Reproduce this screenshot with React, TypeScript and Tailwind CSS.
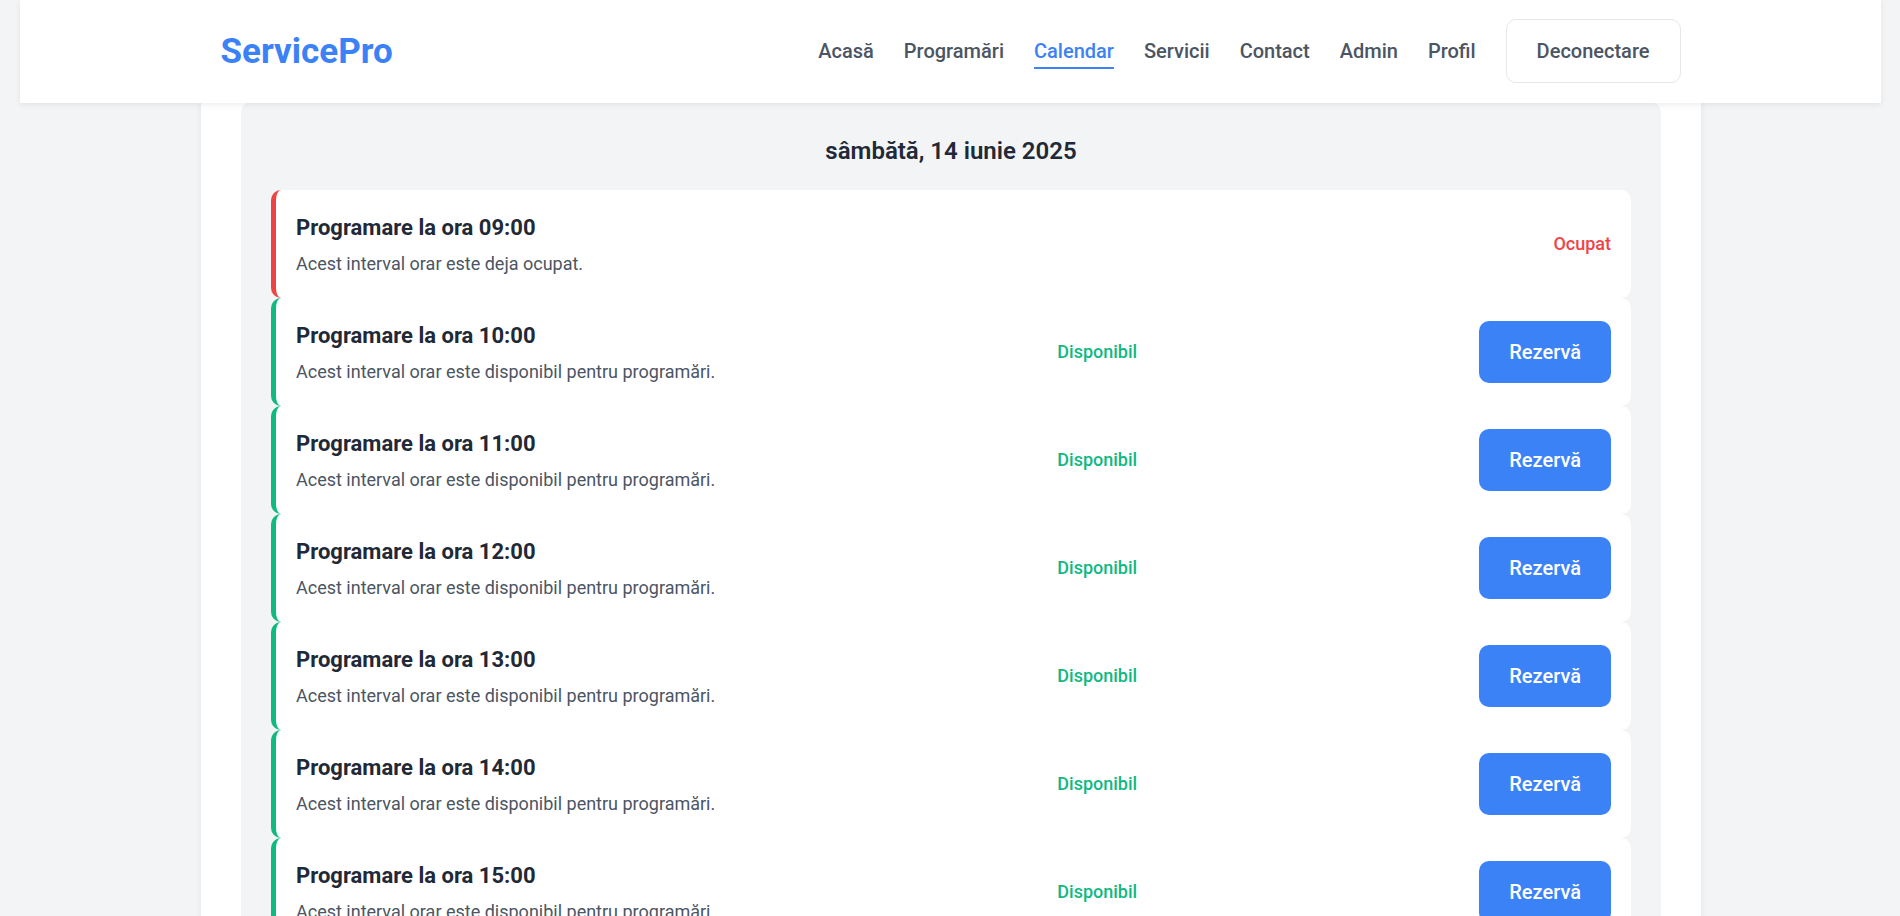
const navLinks = [
  { label: "Acasă", href: "#acasa" },
  { label: "Programări", href: "#programari" },
  { label: "Calendar", href: "#calendar", active: true },
  { label: "Servicii", href: "#servicii" },
  { label: "Contact", href: "#contact" },
  { label: "Admin", href: "#admin" },
  { label: "Profil", href: "#profil" },
];

const slots = [
  { hour: "09:00", available: false },
  { hour: "10:00", available: true },
  { hour: "11:00", available: true },
  { hour: "12:00", available: true },
  { hour: "13:00", available: true },
  { hour: "14:00", available: true },
  { hour: "15:00", available: true },
];

function Header() {
  return (
    <header className="sticky top-0 z-10 mr-[19px] ml-5 bg-white pt-[19px] pb-5 shadow-[0_2px_6px_rgba(0,0,0,0.07)]">
      <div className="mx-auto flex max-w-[1500px] items-center justify-between px-5">
        <a href="#acasa" className="pt-0.5 text-[35px] leading-[56px] font-bold text-[#3b82f6]">
          ServicePro
        </a>
        <nav className="flex items-center gap-[30px]">
          {navLinks.map((link) => (
            <a
              key={link.label}
              href={link.href}
              aria-current={link.active ? "page" : undefined}
              className={
                link.active
                  ? "border-b-2 border-[#3b82f6] pt-0.5 font-medium text-[#3b82f6]"
                  : "border-b-2 border-transparent pt-0.5 font-medium text-[#4b5563]"
              }
            >
              {link.label}
            </a>
          ))}
          <button
            type="button"
            className="rounded-[10px] border border-[#e5e7eb] px-[30px] py-[15px] font-medium text-[#4b5563]"
          >
            Deconectare
          </button>
        </nav>
      </div>
    </header>
  );
}

function Slot({ hour, available }: { hour: string; available: boolean }) {
  return (
    <li
      className={
        available
          ? "flex items-center justify-between rounded-[10px] border-l-[5px] border-[#10b981] bg-white px-5"
          : "flex items-center justify-between rounded-[10px] border-l-[5px] border-[#ef4444] bg-white px-5"
      }
    >
      <div className="py-5">
        <h3 className="mb-[5px] text-[22px] leading-[35px] font-bold text-[#1f2937]">
          Programare la ora {hour}
        </h3>
        <p className="text-[18px] leading-[28px] text-[#4b5563]">
          {available
            ? "Acest interval orar este disponibil pentru programări."
            : "Acest interval orar este deja ocupat."}
        </p>
      </div>
      <span
        className={
          available
            ? "text-[18px] leading-[28px] font-medium text-[#10b981]"
            : "text-[18px] leading-[28px] font-medium text-[#ef4444]"
        }
      >
        {available ? "Disponibil" : "Ocupat"}
      </span>
      {available && (
        <button
          type="button"
          aria-label={`Rezervă ora ${hour}`}
          className="rounded-[10px] bg-[#3b82f6] px-[30px] py-[15px] font-medium text-white"
        >
          Rezervă
        </button>
      )}
    </li>
  );
}

export default function App() {
  return (
    <div className="min-h-screen bg-[#f3f4f6] font-[Roboto,sans-serif] text-[20px] leading-[32px]">
      <Header />
      <main className="-mt-[41px] pr-5 pl-[22px]">
        <div className="mx-auto max-w-[1500px] rounded-[10px] bg-white p-10 shadow-[0_2px_6px_rgba(0,0,0,0.07)]">
          <section className="rounded-[10px] bg-[#f3f4f6] p-[30px]">
            <h2 className="mb-5 text-center text-[24px] leading-[38px] font-semibold text-[#1f2937]">
              sâmbătă, 14 iunie 2025
            </h2>
            <ul>
              {slots.map((slot) => (
                <Slot key={slot.hour} hour={slot.hour} available={slot.available} />
              ))}
            </ul>
          </section>
        </div>
      </main>
    </div>
  );
}
